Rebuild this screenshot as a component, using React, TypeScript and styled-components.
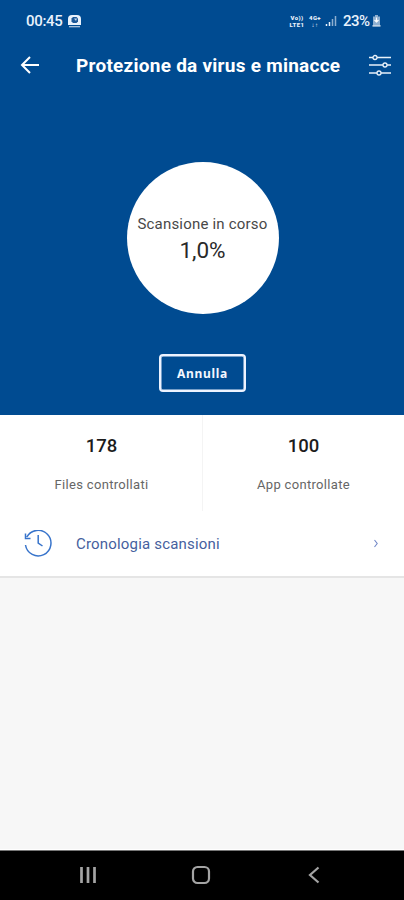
import React from 'react';
import styled, { createGlobalStyle } from 'styled-components';

const GlobalStyle = createGlobalStyle`
  * { box-sizing: border-box; }
  body { margin: 0; background: #f7f7f7; font-family: Roboto, "Liberation Sans", sans-serif; }
  button { font: inherit; padding: 0; border: 0; background: none; color: inherit; }
  svg { display: block; flex: none; }
`;

const Screen = styled.div`
  width: 404px;
  height: 900px;
  display: flex;
  flex-direction: column;
  overflow: hidden;
  background: #f7f7f7;
`;

const Hero = styled.section`
  height: 415px;
  flex: none;
  display: flex;
  flex-direction: column;
  align-items: center;
  background: #004b91;
  color: #fff;
`;

const StatusBar = styled.div`
  width: 100%;
  height: 40px;
  padding: 1px 23px 0 26px;
  display: flex;
  align-items: center;
  color: #e9f2fc;
`;

const Clock = styled.span`
  width: 41px;
  font-size: 15px;
  font-weight: 500;
  letter-spacing: -0.3px;
  white-space: nowrap;
`;

const StatusIcons = styled.div`
  margin-left: auto;
  display: flex;
  align-items: center;
`;

const NetworkLabel = styled.span<{ $width: number }>`
  width: ${({ $width }) => $width}px;
  margin-right: 4px;
  display: flex;
  flex-direction: column;
  align-items: center;
  font-size: 6px;
  line-height: 7px;
  font-weight: 900;
  letter-spacing: 0.4px;
`;

const Battery = styled.span`
  width: 28px;
  margin: 0 1px 0 6px;
  font-size: 15px;
  font-weight: 500;
  letter-spacing: -0.5px;
`;

const AppBar = styled.header`
  width: 100%;
  height: 50px;
  padding: 0 13px 0 20px;
  display: flex;
  align-items: center;
`;

const Title = styled.h1`
  flex: 1;
  margin: 0 0 0 35px;
  font-size: 19px;
  font-weight: 700;
  letter-spacing: 0.25px;
  white-space: nowrap;
`;

const ScanCircle = styled.div`
  width: 152px;
  height: 152px;
  margin: 72px 0 0 1px;
  padding-top: 2px;
  display: flex;
  flex-direction: column;
  align-items: center;
  justify-content: center;
  border-radius: 50%;
  background: #fff;
`;

const ScanLabel = styled.div`
  font-size: 15px;
  line-height: 22px;
  letter-spacing: 0.2px;
  color: #484848;
  white-space: nowrap;
`;

const Percent = styled.div`
  font-size: 22.5px;
  line-height: 30px;
  color: #292929;
`;

const CancelButton = styled.button`
  && {
    width: 87px;
    height: 38px;
    margin-top: 40px;
    padding-left: 1px;
    border: 2px solid #edf3ff;
    border-radius: 4px;
    box-shadow: inset 0 0 0 0.5px #edf3ff;
    color: #f3f7ff;
    font-family: "Noto Sans", sans-serif;
    font-size: 12px;
    font-weight: 700;
    letter-spacing: 0.7px;
  }
`;

const Stats = styled.section`
  height: 96px;
  flex: none;
  display: grid;
  grid-template-columns: 1fr 1fr;
  background: #fff;
`;

const Stat = styled.div`
  padding: 19px 0 0 1px;
  text-align: center;
  & + & { padding-left: 0; border-left: 1px solid #f4f4f4; }
`;

const StatValue = styled.div`
  font-size: 18.5px;
  line-height: 24px;
  font-weight: 500;
  color: #1c1c1c;
`;

const StatLabel = styled.div`
  margin-top: 18px;
  font-size: 13px;
  line-height: 18px;
  letter-spacing: 0.32px;
  color: #666;
`;

const HistoryRow = styled.button`
  && {
    width: 100%;
    height: 67px;
    flex: none;
    padding: 0 25px 0 24px;
    display: flex;
    align-items: center;
    border-bottom: 2px solid #e5e5e5;
    background: #fff;
    color: #465f9e;
    text-align: left;
  }
`;

const HistoryLabel = styled.span`
  flex: 1;
  margin-left: 24px;
  font-size: 15px;
  letter-spacing: 0.18px;
`;

const Content = styled.main`
  flex: 1;
  border-bottom: 1px solid #fff;
`;

const NavBar = styled.nav`
  height: 50px;
  flex: none;
  padding: 0 33px 1px 31px;
  display: grid;
  grid-template-columns: repeat(3, 1fr);
  place-items: center;
  border-top: 1px solid #777;
  background: #000;
`;

const stats = [
  { value: '178', label: 'Files controllati' },
  { value: '100', label: 'App controllate' },
];

export default function App() {
  return (
    <>
      <GlobalStyle />
      <Screen>
        <Hero>
          <StatusBar>
            <Clock>00:45</Clock>
            <svg width="15" height="14" viewBox="0 0 15 14" fill="none">
              <path d="M1 11V5a4 4 0 0 1 4-4h5a4 4 0 0 1 4 4v6z" fill="#e9f2fc" />
              <path d="M4.5 4.5 6 3h3.5L11 4.5v3L9.5 9H6L4.5 7.5z" fill="#1c5898" />
              <path d="M7 4.5h3L9 7z" fill="#c7d8ea" />
              <path d="M2 12.7h11" stroke="#b9cde3" strokeWidth="1.2" />
            </svg>
            <StatusIcons>
              <NetworkLabel $width={16}><span>Vo))</span><span>LTE1</span></NetworkLabel>
              <NetworkLabel $width={12}><span>4G+</span><span>↓↑</span></NetworkLabel>
              <svg width="12" height="12" viewBox="0 0 12 12" strokeWidth="1.5">
                <path d="M1.5 11V9M4.5 11V7" stroke="#e9f2fc" />
                <path d="M7.5 11V4M10.5 11V1" stroke="#8eafd0" />
              </svg>
              <Battery>23%</Battery>
              <svg width="9" height="12" viewBox="0 0 9 12">
                <path d="M3 0h3v1.5h2V10H1V1.5h2z" fill="#8eafd0" />
                <path d="M4.5 2.5v5M2.5 5l2 2 2-2M0.5 10.8h8" fill="none" stroke="#fff" strokeWidth="1.2" />
              </svg>
            </StatusIcons>
          </StatusBar>
          <AppBar>
            <svg width="21" height="20" viewBox="0 0 21 20" fill="none" stroke="#fff" strokeWidth="2">
              <path d="M19 10H3M10 2l-8 8 8 8" />
            </svg>
            <Title>Protezione da virus e minacce</Title>
            <svg width="22" height="24" viewBox="0 0 22 24" fill="none" stroke="#e8f1fa" strokeWidth="1.3">
              <path d="M0 4.5h4M8 4.5h14M0 12h14M18 12h4M0 20h8M12 20h10" />
              <circle cx="6" cy="4.5" r="2" /><circle cx="16" cy="12" r="2" /><circle cx="10" cy="20" r="2" />
            </svg>
          </AppBar>
          <ScanCircle>
            <ScanLabel>Scansione in corso</ScanLabel>
            <Percent>1,0%</Percent>
          </ScanCircle>
          <CancelButton>Annulla</CancelButton>
        </Hero>
        <Stats>
          {stats.map(({ value, label }) => (
            <Stat key={label}><StatValue>{value}</StatValue><StatLabel>{label}</StatLabel></Stat>
          ))}
        </Stats>
        <HistoryRow>
          <svg width="28" height="28" viewBox="0 1 28 28" fill="none" stroke="#3874cb" strokeWidth="1.5">
            <path d="M2.9 8a12.8 12.8 0 1 1-1.4 8M1.5 4.5v5h5M14.2 6v8l4.3 3" />
          </svg>
          <HistoryLabel>Cronologia scansioni</HistoryLabel>
          <svg width="6" height="9" viewBox="0 0 6 9" fill="none" stroke="#7187c7" strokeWidth="1.1">
            <path d="m1.5 1 2.7 3.5L1.5 8" />
          </svg>
        </HistoryRow>
        <Content />
        <NavBar>
          <svg width="18" height="18" viewBox="0 0 18 18" stroke="#a4a4a4" strokeWidth="2.7">
            <path d="M2.5 1v16M9 1v16M15.5 1v16" />
          </svg>
          <svg width="20" height="20" viewBox="0 0 20 20" fill="none" stroke="#a4a4a4" strokeWidth="2.2">
            <rect x="2" y="2" width="16" height="16" rx="4.5" />
          </svg>
          <svg width="12" height="18" viewBox="0 0 12 18" fill="none" stroke="#a4a4a4" strokeWidth="2.2">
            <path d="M10.5 1.5 2 9l8.5 7.5" />
          </svg>
        </NavBar>
      </Screen>
    </>
  );
}
